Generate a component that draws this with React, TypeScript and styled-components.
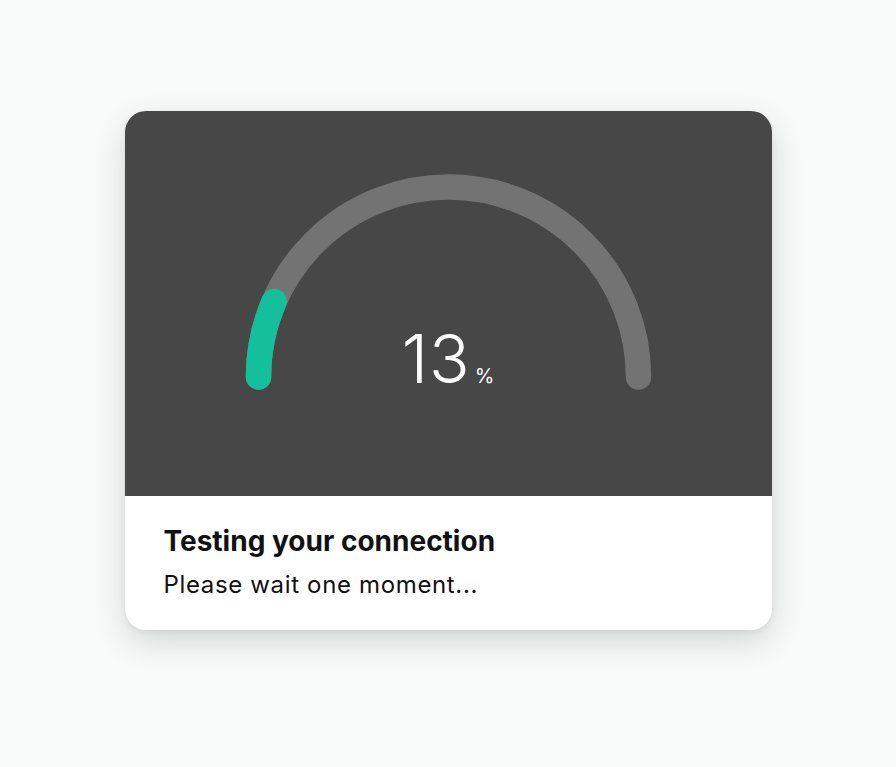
import React from "react";
import styled, { createGlobalStyle } from "styled-components";

const Global = createGlobalStyle`
  html, body { margin: 0; padding: 0; background: #f8f9f9; }
  body { font-family: Inter, "Noto Sans", sans-serif; }
`;

const Page = styled.div`
  width: 896px;
  height: 767px;
  display: flex;
  justify-content: center;
  padding-top: 111px;
  box-sizing: border-box;
`;

const Card = styled.div`
  width: 647px;
  height: 519px;
  border-radius: 21px;
  overflow: hidden;
  background: #ffffff;
  box-shadow: 0 12px 32px rgba(0, 0, 0, 0.14), 0 2px 6px rgba(0, 0, 0, 0.06);
  display: flex;
  flex-direction: column;
`;

const GaugePanel = styled.div`
  position: relative;
  height: 385px;
  background: #474747;
  flex-shrink: 0;
`;

const GaugeSvg = styled.svg`
  display: block;
`;

const Readout = styled.div`
  position: absolute;
  left: 0;
  right: 0;
  top: 214px;
  display: flex;
  justify-content: center;
  align-items: baseline;
  color: #ffffff;
  font-family: Inter, sans-serif;
  font-weight: 300;
`;

const Value = styled.span`
  font-size: 67px;
  line-height: 1;
  letter-spacing: 1px;
`;

const Unit = styled.span`
  font-size: 20px;
  margin-left: 4px;
  font-weight: 400;
`;

const Body = styled.div`
  flex: 1;
  padding: 28px 39px 0;
  display: flex;
  flex-direction: column;
`;

const Title = styled.h2`
  margin: 0;
  font-family: Inter, sans-serif;
  font-size: 28px;
  line-height: 34px;
  font-weight: 700;
  color: #111111;
`;

const Subtitle = styled.p`
  margin: 12px 0 0;
  font-family: Inter, sans-serif;
  font-size: 24px;
  line-height: 30px;
  font-weight: 400;
  letter-spacing: 0.65px;
  color: #111111;
`;

const CX = 323.5;
const CY = 266;
const R = 190;

function point(angleDeg: number) {
  const a = (angleDeg * Math.PI) / 180;
  return [CX + R * Math.cos(a), CY - R * Math.sin(a)];
}

function arcPath(fromDeg: number, toDeg: number) {
  const [x1, y1] = point(fromDeg);
  const [x2, y2] = point(toDeg);
  const large = Math.abs(fromDeg - toDeg) > 180 ? 1 : 0;
  return `M ${x1} ${y1} A ${R} ${R} 0 ${large} 1 ${x2} ${y2}`;
}

export default function App() {
  const percent = 13;
  const end = 180 - (180 * percent) / 100;
  return (
    <>
      <Global />
      <Page>
        <Card>
          <GaugePanel>
            <GaugeSvg width={647} height={385} viewBox="0 0 647 385">
              <path d={arcPath(180, 0)} fill="none" stroke="#737373" strokeWidth={25.5} strokeLinecap="round" />
              <path d={arcPath(180, end)} fill="none" stroke="#14c09c" strokeWidth={25.5} strokeLinecap="round" />
            </GaugeSvg>
            <Readout>
              <Value>{percent}</Value>
              <Unit>%</Unit>
            </Readout>
          </GaugePanel>
          <Body>
            <Title>Testing your connection</Title>
            <Subtitle>Please wait one moment...</Subtitle>
          </Body>
        </Card>
      </Page>
    </>
  );
}
